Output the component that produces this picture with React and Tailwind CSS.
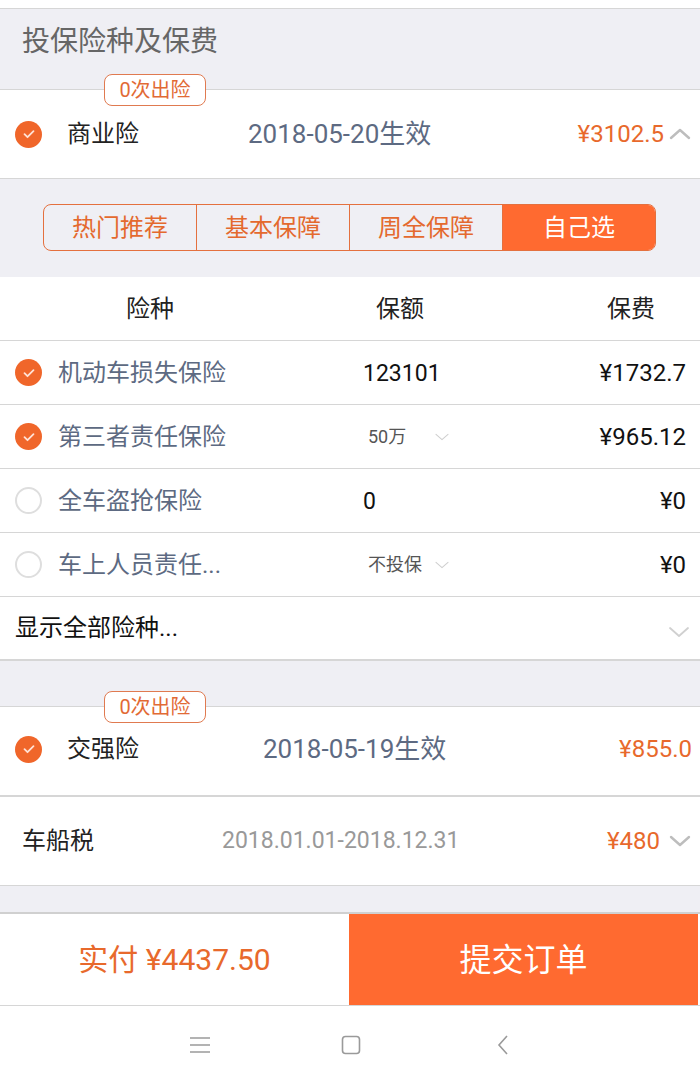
import React from "react";

const ORANGE = "text-[#e8692c]";

function Check({ on }) {
  if (!on) {
    return <span className="block w-[27px] h-[27px] rounded-full border-2 border-[#dedede] bg-white shrink-0" />;
  }
  return (
    <span className="flex items-center justify-center w-[27px] h-[27px] rounded-full bg-[#f0662a] shrink-0">
      <svg width="14" height="14" viewBox="0 0 14 14" fill="none">
        <path d="M2.5 7.2l3 3 6-6" stroke="#ffe2d6" strokeWidth="1.8" strokeLinecap="round" strokeLinejoin="round" />
      </svg>
    </span>
  );
}

function Chevron({ up, color = "#bdbdbd", size = 24, stroke = 2.4 }) {
  return (
    <svg width={size} height={size} viewBox="0 0 24 24" fill="none">
      <path
        d={up ? "M3 16l9-8 9 8" : "M3 8l9 8 9-8"}
        stroke={color}
        strokeWidth={stroke}
        strokeLinecap="round"
        strokeLinejoin="round"
      />
    </svg>
  );
}

function Badge() {
  return (
    <div className="absolute left-[104px] top-[-16px] w-[102px] h-[32px] rounded-lg border-[1.5px] border-[#e07a50] bg-white flex items-center justify-center text-[20px] text-[#e26a35] leading-none">
      0次出险
    </div>
  );
}

const rows = [
  { on: true, name: "机动车损失保险", amount: "123101", price: "¥1732.7" },
  { on: true, name: "第三者责任保险", amount: "50万", select: true, price: "¥965.12" },
  { on: false, name: "全车盗抢保险", amount: "0", price: "¥0" },
  { on: false, name: "车上人员责任...", amount: "不投保", select: true, price: "¥0" },
];

const tabs = ["热门推荐", "基本保障", "周全保障", "自己选"];

export default function App() {
  return (
    <div className="w-[700px] h-[1077px] bg-[#efeff4] font-[Roboto,'Noto_Sans_CJK_SC',sans-serif] flex flex-col overflow-hidden">
      {/* top strip */}
      <div className="h-[9px] bg-white border-b border-[#d6d6d6] shrink-0" />

      {/* section title */}
      <div className="h-[80px] pl-[22px] pt-[12px] text-[28px] text-[#666] shrink-0">投保险种及保费</div>

      {/* 商业险 */}
      <div className="relative h-[90px] bg-white border-y border-[#d6d6d6] flex items-center shrink-0">
        <Badge />
        <div className="pl-[15px]"><Check on /></div>
        <div className="ml-[25px] w-[181px] text-[24px] text-[#222]">商业险</div>
        <div className="flex-1 text-[26px] text-[#5d6a82]">2018-05-20生效</div>
        <div className={`text-[24px] ${ORANGE}`}>¥3102.5</div>
        <div className="ml-[4px] mr-[8px]"><Chevron up /></div>
      </div>

      {/* tabs */}
      <div className="h-[98px] pt-[25px] px-[43px] shrink-0">
        <div className="flex h-[47px] w-[613px] rounded-lg border-[1.5px] border-[#e4703e] overflow-hidden">
          {tabs.map((t, i) => (
            <div
              key={t}
              className={
                i === 3
                  ? "flex-1 flex items-center justify-center bg-[#ff6a30] text-white text-[24px]"
                  : "flex-1 flex items-center justify-center border-r-[1.5px] border-[#e4703e] text-[#e4692e] text-[24px]"
              }
            >
              {t}
            </div>
          ))}
        </div>
      </div>

      {/* header */}
      <div className="h-[64px] bg-white border-b border-[#d6d6d6] flex items-center text-[24px] text-[#222] shrink-0">
        <div className="w-[300px] text-center">险种</div>
        <div className="w-[200px] text-center">保额</div>
        <div className="flex-1 text-right pr-[45px]">保费</div>
      </div>

      {/* rows */}
      {rows.map((r) => (
        <div key={r.name} className="h-[64px] bg-white border-b border-[#d6d6d6] flex items-center shrink-0">
          <div className="pl-[15px]"><Check on={r.on} /></div>
          <div className="ml-[16px] w-[305px] text-[24px] text-[#5d6a82]">{r.name}</div>
          {r.select ? (
            <div className="flex-1 flex items-center pl-[5px] text-[18px] text-[#555]">
              <span className="w-[66px]">{r.amount}</span>
              <Chevron color="#cfcfcf" size={16} stroke={1.6} />
            </div>
          ) : (
            <div className="flex-1 text-[23px] leading-[36px] pt-[2px] text-[#111]">{r.amount}</div>
          )}
          <div className="pr-[14px] text-[24px] text-[#111]">{r.price}</div>
        </div>
      ))}

      {/* show all */}
      <div className="h-[64px] bg-white border-b-2 border-[#d6d6d6] flex items-center justify-between pl-[15px] pr-[9px] shrink-0">
        <div className="text-[24px] text-[#111]">显示全部险种...</div>
        <div className="pt-[8px]"><Chevron color="#d0d0d0" size={24} stroke={1.8} /></div>
      </div>

      <div className="h-[45px] shrink-0" />

      {/* 交强险 */}
      <div className="relative h-[91px] bg-white border-t border-b-2 border-[#d6d6d6] flex items-center pb-[4px] shrink-0">
        <Badge />
        <div className="pl-[15px]"><Check on /></div>
        <div className="ml-[25px] w-[196px] text-[24px] text-[#222]">交强险</div>
        <div className="flex-1 text-[26px] text-[#5d6a82]">2018-05-19生效</div>
        <div className={`pr-[8px] text-[24px] ${ORANGE}`}>¥855.0</div>
      </div>

      {/* 车船税 */}
      <div className="h-[89px] bg-white border-b border-[#d6d6d6] flex items-center shrink-0">
        <div className="pl-[22px] w-[222px] text-[24px] text-[#222]">车船税</div>
        <div className="flex-1 text-[23px] text-[#999]">2018.01.01-2018.12.31</div>
        <div className={`text-[24px] ${ORANGE}`}>¥480</div>
        <div className="ml-[8px] mr-[8px]"><Chevron color="#bdbdbd" size={24} stroke={2.4} /></div>
      </div>

      <div className="h-[28px] border-b-2 border-[#d0d0d0] shrink-0" />

      {/* bottom bar */}
      <div className="h-[92px] bg-white border-b border-[#d6d6d6] flex shrink-0">
        <div className={`w-[349px] flex items-center justify-center text-[30px] ${ORANGE}`}>实付 ¥4437.50</div>
        <div className="flex-1 mr-[2px] bg-[#ff6a30] flex items-center justify-center text-white text-[32px]">提交订单</div>
      </div>

      {/* android nav */}
      <div className="flex-1 bg-white flex items-center pl-[189px] pt-[6px]">
        <svg width="22" height="18" viewBox="0 0 22 18" fill="none">
          <path d="M1 2h20M1 9h20M1 16h20" stroke="#9a9a9a" strokeWidth="1.6" />
        </svg>
        <svg className="ml-[130px]" width="20" height="20" viewBox="0 0 20 20" fill="none">
          <rect x="1.5" y="1.5" width="17" height="17" rx="3" stroke="#9a9a9a" strokeWidth="1.6" />
        </svg>
        <svg className="ml-[135px]" width="14" height="22" viewBox="0 0 14 22" fill="none">
          <path d="M11 2L3 11l8 9" stroke="#9a9a9a" strokeWidth="1.6" />
        </svg>
      </div>
    </div>
  );
}
